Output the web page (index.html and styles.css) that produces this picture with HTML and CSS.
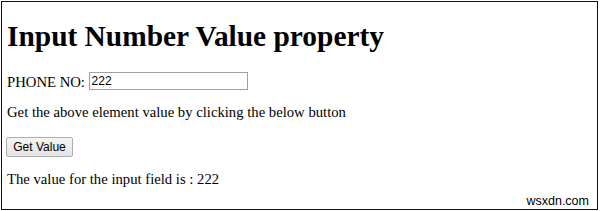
FILE: index.html
```html
<!DOCTYPE html>
<html lang="en">
<head>
    <meta charset="UTF-8">
    <title>Input Number Value property</title>
    <link rel="stylesheet" href="styles.css">
</head>
<body>
    <div class="frame">
        <h1>Input Number Value property</h1>
        <p class="phone">PHONE NO: <input type="number" id="num" class="num-field" value="222"></p>
        <p class="info">Get the above element value by clicking the below button</p>
        <div class="actions">
            <button type="button" class="btn-get" id="getBtn">Get Value</button>
        </div>
        <p class="result" id="result">The value for the input field is : 222</p>
        <span class="watermark">wsxdn.com</span>
    </div>

    <script>
        // show the value of the number field
        document.getElementById('getBtn').addEventListener('click', function() {
            var val = document.getElementById('num').value;
            document.getElementById('result').textContent = 'The value for the input field is : ' + val;
        });
    </script>
</body>
</html>
```

FILE: styles.css
```css
/* base */
* {
    box-sizing: border-box;
}

body {
    margin: 0;
    font-family: 'Liberation Serif', 'Times New Roman', serif;
    font-size: 14.7px;
    color: #000;
    background: #fff;
}

.frame {
    position: relative;
    width: 597px;
    height: 209px;
    margin: 1px;
    padding: 0 5px;
    border: 1px solid #111;
    overflow: hidden;
}

h1 {
    margin: 16px 0 0;
    font-size: 29.4px;
    line-height: 36px;
    font-weight: bold;
}

p {
    margin: 0;
    line-height: 20px;
}

.phone {
    margin-top: 18px;
}

.info {
    margin-top: 10px;
}

.result {
    margin-top: 12px;
}

/* number field without spinner */
.num-field {
    width: 159px;
    height: 18px;
    padding: 0 2px;
    border: 1px solid #a0a0a0;
    font-family: 'Liberation Sans', Arial, sans-serif;
    font-size: 12px;
    color: #000;
    vertical-align: 2px;
    -moz-appearance: textfield;
}

    .num-field::-webkit-inner-spin-button,
    .num-field::-webkit-outer-spin-button {
        -webkit-appearance: none;
        margin: 0;
    }

.actions {
    margin-top: 15px;
}

.btn-get {
    display: block;
    width: 67px;
    height: 20px;
    margin-left: -1px;
    padding: 0;
    border: 1px solid #adadad;
    border-radius: 2px;
    background: linear-gradient(#f4f4f4, #e4e4e4);
    font-family: 'Liberation Sans', Arial, sans-serif;
    font-size: 12px;
    color: #000;
}

.watermark {
    position: absolute;
    right: 8px;
    bottom: 2px;
    font-family: 'Liberation Sans', Arial, sans-serif;
    font-size: 12.5px;
    line-height: 12px;
    color: #000;
}
```
